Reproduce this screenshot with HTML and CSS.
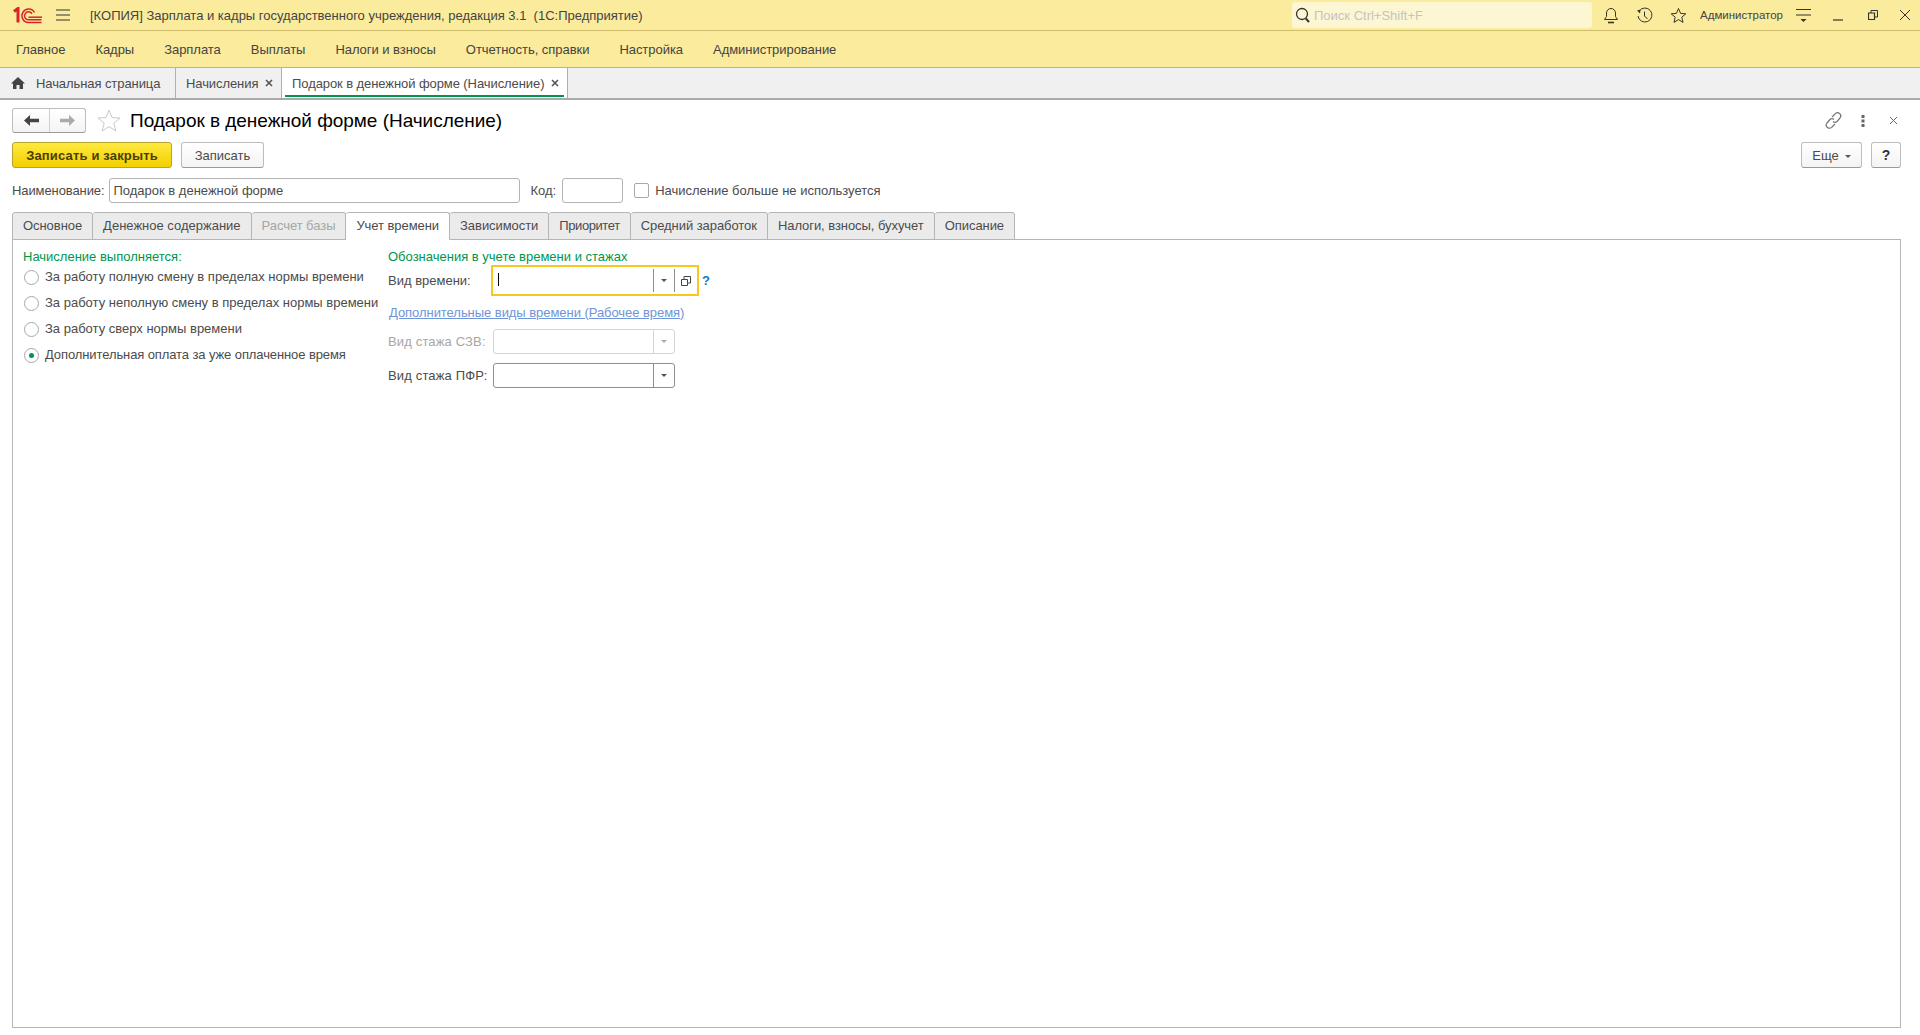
FILE: index.html
```html
<!DOCTYPE html>
<html lang="ru">
<head>
    <meta charset="UTF-8">
    <title>Подарок в денежной форме (Начисление)</title>
    <link rel="stylesheet" href="styles.css">
</head>
<body>
    <div class="titlebar">
        <svg class="logo" width="30" height="17" viewBox="0 0 30 17" fill="none" stroke="#d9242b">
            <path d="M1 4.5 L5 1.5 V15.5" stroke-width="3"/>
            <path d="M28.5 15.5 H15.5 A6.7 6.7 0 1 1 21.5 5.5" stroke-width="1.5"/>
            <path d="M28.5 12.8 H15.5 A4 4 0 1 1 19 6.8" stroke-width="1.5"/>
            <path d="M29 10.2 H15.5" stroke-width="1.5"/>
        </svg>
        <svg class="burger" width="14" height="12" viewBox="0 0 14 12" stroke="#333" stroke-width="1.2">
            <path d="M0 1 H14 M0 6 H14 M0 11 H14"/>
        </svg>
        <div class="app-title">[КОПИЯ] Зарплата и кадры государственного учреждения, редакция 3.1&nbsp; (1С:Предприятие)</div>
        <div class="search">
            <svg width="16" height="17" viewBox="0 0 16 17" fill="none" stroke="#333">
                <circle cx="7" cy="7" r="5.5" stroke-width="1.3"/>
                <path d="M10.8 11.5 L14 15" stroke-width="2"/>
            </svg>
            <span>Поиск Ctrl+Shift+F</span>
        </div>
        <svg class="tool bell" width="16" height="17" viewBox="0 0 16 17" fill="none" stroke="#333">
            <path d="M1.5 12.5 H14.5 L12.5 9.5 V6 A4.5 4.5 0 0 0 3.5 6 V9.5 Z"/>
            <path d="M5 15.5 H11" stroke-width="1.6"/>
        </svg>
        <svg class="tool clock" width="17" height="17" viewBox="0 0 17 17" fill="none" stroke="#333">
            <path d="M3.2 4 A7 7 0 1 1 2 9"/>
            <path d="M1 3.5 L4.5 2.5 L4 6.5 Z" fill="#333" stroke="none"/>
            <path d="M8.5 4.5 V9 L11.5 12"/>
        </svg>
        <svg class="tool star" width="17" height="17" viewBox="0 0 17 17" fill="none" stroke="#333">
            <path d="M8.5 1.5 L10.6 6.4 L15.8 6.8 L11.8 10.2 L13 15.4 L8.5 12.6 L4 15.4 L5.2 10.2 L1.2 6.8 L6.4 6.4 Z"/>
        </svg>
        <div class="user">Администратор</div>
        <svg class="tool filter" width="15" height="15" viewBox="0 0 15 15" stroke="#333">
            <path d="M0 1.5 H15 M0 7 H15"/>
            <path d="M4.5 11 H10.5 L7.5 14 Z" fill="#333" stroke="none"/>
        </svg>
        <svg class="tool minimize" width="10" height="12" viewBox="0 0 10 12" stroke="#333">
            <path d="M0 11 H10" stroke-width="1.2"/>
        </svg>
        <svg class="tool restore" width="10" height="10" viewBox="0 0 10 10" fill="none" stroke="#333">
            <path d="M0.5 3 H6.5 V9.5 H0.5 Z" stroke-width="1.2"/>
            <path d="M3 3 V0.5 H9.5 V7 H6.5"/>
        </svg>
        <svg class="tool closewin" width="12" height="12" viewBox="0 0 12 12" stroke="#333">
            <path d="M1 1 L11 11 M11 1 L1 11"/>
        </svg>
    </div>

    <div class="menubar">
        <a>Главное</a>
        <a>Кадры</a>
        <a>Зарплата</a>
        <a>Выплаты</a>
        <a>Налоги и взносы</a>
        <a>Отчетность, справки</a>
        <a>Настройка</a>
        <a>Администрирование</a>
    </div>

    <div class="pagetabs">
        <div class="pagetab home">
            <svg width="14" height="12" viewBox="0 0 14 12" fill="#444">
                <path d="M7 0 L14 6.5 H12 V12 H8.5 V8 H5.5 V12 H2 V6.5 H0 Z"/>
            </svg>
            <span>Начальная страница</span>
        </div>
        <div class="pagetab second">
            <span>Начисления</span>
            <svg class="tab-x" width="8" height="8" viewBox="0 0 8 8" stroke="#555" stroke-width="1.6"><path d="M1 1 L7 7 M7 1 L1 7"/></svg>
        </div>
        <div class="pagetab current">
            <span>Подарок в денежной форме (Начисление)</span>
            <svg class="tab-x" width="8" height="8" viewBox="0 0 8 8" stroke="#555" stroke-width="1.6"><path d="M1 1 L7 7 M7 1 L1 7"/></svg>
        </div>
    </div>

    <div class="form">
        <div class="form-head">
            <div class="nav-buttons">
                <div class="nav-btn">
                    <svg width="15" height="11" viewBox="0 0 15 11" fill="#444"><path d="M0 5.5 L6 0 V3.8 H15 V7.2 H6 V11 Z"/></svg>
                </div>
                <div class="nav-btn">
                    <svg width="15" height="11" viewBox="0 0 15 11" fill="#aaa"><path d="M15 5.5 L9 0 V3.8 H0 V7.2 H9 V11 Z"/></svg>
                </div>
            </div>
            <svg class="fav" width="24" height="23" viewBox="0 0 24 23" fill="none" stroke="#c8c8c8">
                <path d="M12 1 L15 8.6 L23 9 L16.8 14.1 L18.9 22 L12 17.6 L5.1 22 L7.2 14.1 L1 9 L9 8.6 Z"/>
            </svg>
            <h1>Подарок в денежной форме (Начисление)</h1>
            <svg class="head-link" width="17" height="17" viewBox="0 0 17 17" fill="none" stroke="#777" stroke-width="1.2">
                <path d="M7 5 L10 2 A2.8 2.8 0 0 1 15 6 L12 9.5 A2.8 2.8 0 0 1 8 9.5"/>
                <path d="M10 12 L7 15 A2.8 2.8 0 0 1 2 11 L5 7.5 A2.8 2.8 0 0 1 9 7.5"/>
            </svg>
            <svg class="head-dots" width="4" height="12" viewBox="0 0 4 12" fill="#666">
                <rect x="0.5" y="0" width="3" height="3"/>
                <rect x="0.5" y="4.5" width="3" height="3"/>
                <rect x="0.5" y="9" width="3" height="3"/>
            </svg>
            <svg class="head-close" width="9" height="9" viewBox="0 0 9 9" stroke="#666"><path d="M1 1 L8 8 M8 1 L1 8"/></svg>
        </div>

        <div class="commands">
            <button class="btn primary">Записать и закрыть</button>
            <button class="btn save">Записать</button>
            <button class="btn more">Еще<i class="arrow"></i></button>
            <button class="btn help">?</button>
        </div>

        <div class="name-row">
            <label class="name-label">Наименование:</label>
            <div class="input name-input">Подарок в денежной форме</div>
            <label class="code-label">Код:</label>
            <div class="input code-input"></div>
            <div class="checkbox"></div>
            <label>Начисление больше не используется</label>
        </div>

        <div class="formtabs">
            <div class="formtab">Основное</div>
            <div class="formtab wide">Денежное содержание</div>
            <div class="formtab disabled">Расчет базы</div>
            <div class="formtab active">Учет времени</div>
            <div class="formtab">Зависимости</div>
            <div class="formtab priority">Приоритет</div>
            <div class="formtab">Средний заработок</div>
            <div class="formtab">Налоги, взносы, бухучет</div>
            <div class="formtab">Описание</div>
        </div>

        <div class="panel">
            <div class="col-left">
                <div class="group-title">Начисление выполняется:</div>
                <div class="radio-row"><span class="radio"></span>За работу полную смену в пределах нормы времени</div>
                <div class="radio-row"><span class="radio"></span>За работу неполную смену в пределах нормы времени</div>
                <div class="radio-row"><span class="radio"></span>За работу сверх нормы времени</div>
                <div class="radio-row last"><span class="radio checked"></span>Дополнительная оплата за уже оплаченное время</div>
            </div>
            <div class="col-right">
                <div class="group-title">Обозначения в учете времени и стажах</div>
                <div class="field-row focus-row">
                    <label>Вид времени:</label>
                    <div class="combo focused">
                        <span class="caret"></span>
                        <span class="combo-btn"><i class="arrow"></i></span>
                        <span class="combo-btn open-btn">
                            <svg width="10" height="10" viewBox="0 0 10 10" fill="none" stroke="#444"><path d="M3 3 V0.5 H9.5 V7 H7"/><path d="M0.5 3.5 H6.5 V9.5 H0.5 Z"/></svg>
                        </span>
                    </div>
                    <span class="hint">?</span>
                </div>
                <div class="link-row"><a>Дополнительные виды времени (Рабочее время)</a></div>
                <div class="field-row szv-row">
                    <label class="muted">Вид стажа СЗВ:</label>
                    <div class="combo disabled">
                        <span class="combo-btn"><i class="arrow"></i></span>
                    </div>
                </div>
                <div class="field-row pfr-row">
                    <label>Вид стажа ПФР:</label>
                    <div class="combo">
                        <span class="combo-btn"><i class="arrow"></i></span>
                    </div>
                </div>
            </div>
        </div>
    </div>
</body>
</html>
```

FILE: styles.css
```css
* {
    box-sizing: border-box;
}

html, body {
    height: 100%;
}

body {
    margin: 0;
    display: flex;
    flex-direction: column;
    height: 1035px;
    overflow: hidden;
    background-color: #fff;
    font-family: "Liberation Sans", Arial, sans-serif;
    font-size: 13px;
    color: #4b4b4b;
}

svg {
    display: block;
    flex: none;
}

/* title bar */
.titlebar {
    display: flex;
    align-items: center;
    height: 31px;
    flex: none;
    background-color: #fbeb9c;
    border-bottom: 1px solid #cdbd6c;
}

.logo {
    margin-left: 13px;
}

.burger {
    margin-left: 13px;
}

.app-title {
    margin-left: 20px;
    width: 1202px;
    color: #444;
}

.search {
    display: flex;
    align-items: center;
    width: 300px;
    height: 26px;
    padding-left: 3px;
    background-color: #fdf6d3;
    border-radius: 3px;
    color: #c4c4c4;
}

.search span {
    margin-left: 3px;
}

.bell {
    margin-left: 11px;
}

.clock {
    margin-left: 17px;
}

.star {
    margin-left: 17px;
}

.user {
    margin-left: 13px;
    width: 83px;
    font-size: 11.5px;
    white-space: nowrap;
    color: #444;
}

.filter {
    margin-left: 13px;
}

.minimize {
    margin-left: 22px;
}

.restore {
    margin-left: 25px;
}

.closewin {
    margin-left: 21px;
}

/* sections */
.menubar {
    display: flex;
    align-items: center;
    height: 37px;
    flex: none;
    padding-left: 1px;
    background-color: #fbeb9c;
    border-bottom: 1px solid #c4b46a;
}

.menubar a {
    padding: 0 15px;
    letter-spacing: -0.04px;
    color: #444;
}

/* open pages */
.pagetabs {
    display: flex;
    height: 32px;
    flex: none;
    background-color: #f0f0f0;
    border-bottom: 2px solid #aaa;
}

.pagetab {
    display: flex;
    align-items: center;
    height: 30px;
    letter-spacing: -0.08px;
    border-right: 1px solid #b0b0b0;
    color: #4b4b4b;
}

.pagetab.home {
    width: 176px;
    padding-left: 11px;
}

.pagetab.home span {
    margin-left: 11px;
}

.pagetab.second {
    width: 106px;
    padding-left: 10px;
}

.pagetab.current {
    position: relative;
    width: 286px;
    padding-left: 10px;
    background-color: #fff;
}

.pagetab.current::after {
    content: "";
    position: absolute;
    left: 3px;
    right: 3px;
    bottom: 1px;
    height: 2px;
    background-color: #00964b;
}

.tab-x {
    margin-left: auto;
    margin-right: 8px;
}

/* form */
.form {
    display: flex;
    flex-direction: column;
    flex: 1;
    padding: 8px 19px 7px 12px;
}

.form-head {
    display: flex;
    align-items: center;
    height: 25px;
    flex: none;
}

.nav-buttons {
    display: flex;
    width: 74px;
    height: 25px;
    background: linear-gradient(#fff, #f4f4f4);
    border: 1px solid #bdbdbd;
    border-bottom-color: #999;
    border-radius: 3px;
}

.nav-btn {
    display: flex;
    align-items: center;
    justify-content: center;
    width: 36px;
}

.nav-btn + .nav-btn {
    border-left: 1px solid #d0d0d0;
}

.fav {
    margin-left: 11px;
}

h1 {
    margin: 0 0 0 9px;
    font-size: 19px;
    font-weight: normal;
    letter-spacing: -0.03px;
    color: #000;
}

.head-link {
    margin-left: auto;
}

.head-dots {
    margin-left: 19px;
}

.head-close {
    margin-left: 24px;
    margin-right: 3px;
}

.commands {
    display: flex;
    height: 26px;
    flex: none;
    margin-top: 9px;
}

.btn {
    height: 26px;
    padding: 0;
    font-family: inherit;
    font-size: 13px;
    color: #4b4b4b;
    background: linear-gradient(#fff, #f3f3f3);
    border: 1px solid #bdbdbd;
    border-bottom-color: #999;
    border-radius: 3px;
}

.btn.primary {
    width: 160px;
    font-weight: bold;
    letter-spacing: 0.16px;
    color: #4a3f00;
    background: linear-gradient(#ffe93f, #f2cf00);
    border-color: #b9a22e;
}

.btn.save {
    width: 83px;
    margin-left: 9px;
}

.btn.more {
    width: 61px;
    margin-left: auto;
}

.btn.more .arrow {
    margin-left: 6px;
}

.btn.help {
    width: 30px;
    margin-left: 9px;
    font-size: 14px;
    font-weight: bold;
    color: #333;
}

.arrow {
    display: inline-block;
    width: 0;
    height: 0;
    vertical-align: middle;
    border-top: 3px solid #555;
    border-left: 3px solid transparent;
    border-right: 3px solid transparent;
}

.name-row {
    display: flex;
    align-items: center;
    height: 25px;
    flex: none;
    margin-top: 10px;
}

.name-label {
    letter-spacing: -0.1px;
}

.input {
    height: 25px;
    padding: 4px 3px;
    line-height: 15px;
    background-color: #fff;
    border: 1px solid #b3b3b3;
    border-radius: 3px;
}

.name-input {
    width: 411px;
    margin-left: 5px;
}

.code-label {
    margin-left: 10px;
}

.code-input {
    width: 61px;
    margin-left: 6px;
}

.checkbox {
    width: 15px;
    height: 15px;
    margin: 0 6px 0 11px;
    border: 1px solid #a8a8a8;
    border-radius: 2px;
}

/* tabs of the form */
.formtabs {
    display: flex;
    height: 28px;
    flex: none;
    margin-top: 9px;
    position: relative;
    z-index: 1;
}

.formtab {
    display: flex;
    align-items: center;
    justify-content: center;
    height: 28px;
    padding: 0 10px 2px;
    letter-spacing: -0.06px;
    background-color: #ebebeb;
    border: 1px solid #b5b5b5;
    border-left: 0;
    border-radius: 3px 3px 0 0;
}

.formtab:first-child {
    border-left: 1px solid #b5b5b5;
}

.formtab.wide {
    letter-spacing: 0;
}

.formtab.priority {
    letter-spacing: -0.42px;
}

.formtab.disabled {
    color: #a6a6a6;
}

.formtab.active {
    background-color: #fff;
    border-bottom-color: #fff;
}

.panel {
    display: flex;
    flex: 1;
    margin-top: -1px;
    padding: 10px 0 0 10px;
    border: 1px solid #b5b5b5;
}

.col-left {
    width: 365px;
    flex: none;
}

.group-title {
    height: 15px;
    line-height: 13px;
    color: #00964b;
}

.radio-row {
    display: flex;
    align-items: center;
    height: 26px;
    padding-bottom: 2px;
    white-space: nowrap;
}

.radio-row.last {
    letter-spacing: -0.1px;
}

.col-left .group-title {
    margin-bottom: -1px;
}

.radio {
    width: 15px;
    height: 15px;
    margin: 0 6px -2px 1px;
    flex: none;
    border: 1px solid #a8a8a8;
    border-radius: 50%;
    display: flex;
    align-items: center;
    justify-content: center;
}

.radio.checked::before {
    content: "";
    width: 5px;
    height: 5px;
    border-radius: 50%;
    background-color: #00964b;
}

.field-row {
    display: flex;
    align-items: center;
}

.field-row label {
    width: 105px;
    flex: none;
}

.szv-row label,
.pfr-row label {
    letter-spacing: 0.15px;
}

.field-row .muted {
    color: #a6a6a6;
}

.focus-row {
    height: 31px;
}

.focus-row label {
    width: 103px;
}

.combo {
    display: flex;
    justify-content: flex-end;
    width: 182px;
    height: 25px;
    background-color: #fff;
    border: 1px solid #8f8f8f;
    border-radius: 3px;
}

.combo.disabled {
    border-color: #d5d5d5;
}

.combo.disabled .arrow {
    border-top-color: #aaa;
}

.combo.focused {
    width: 208px;
    height: 31px;
    border: 2px solid #f9c81e;
    border-radius: 0;
    padding: 2px 0 2px 1px;
}

.combo-btn {
    display: flex;
    align-items: center;
    justify-content: center;
    width: 21px;
    flex: none;
    border-left: 1px solid #8f8f8f;
}

.combo.disabled .combo-btn {
    border-left-color: #d5d5d5;
}

.open-btn {
    width: 23px;
}

.caret {
    width: 1px;
    height: 13px;
    margin: 4px auto 0 4px;
    background-color: #000;
}

.hint {
    margin-left: 3px;
    font-size: 13px;
    font-weight: bold;
    color: #1a78c2;
}

.link-row {
    height: 15px;
    margin-top: 9px;
    padding-left: 1px;
    line-height: 15px;
    letter-spacing: -0.05px;
}

.link-row a {
    color: #6f94d8;
    text-decoration: underline;
}

.szv-row {
    margin-top: 9px;
}

.pfr-row {
    margin-top: 9px;
}
```
